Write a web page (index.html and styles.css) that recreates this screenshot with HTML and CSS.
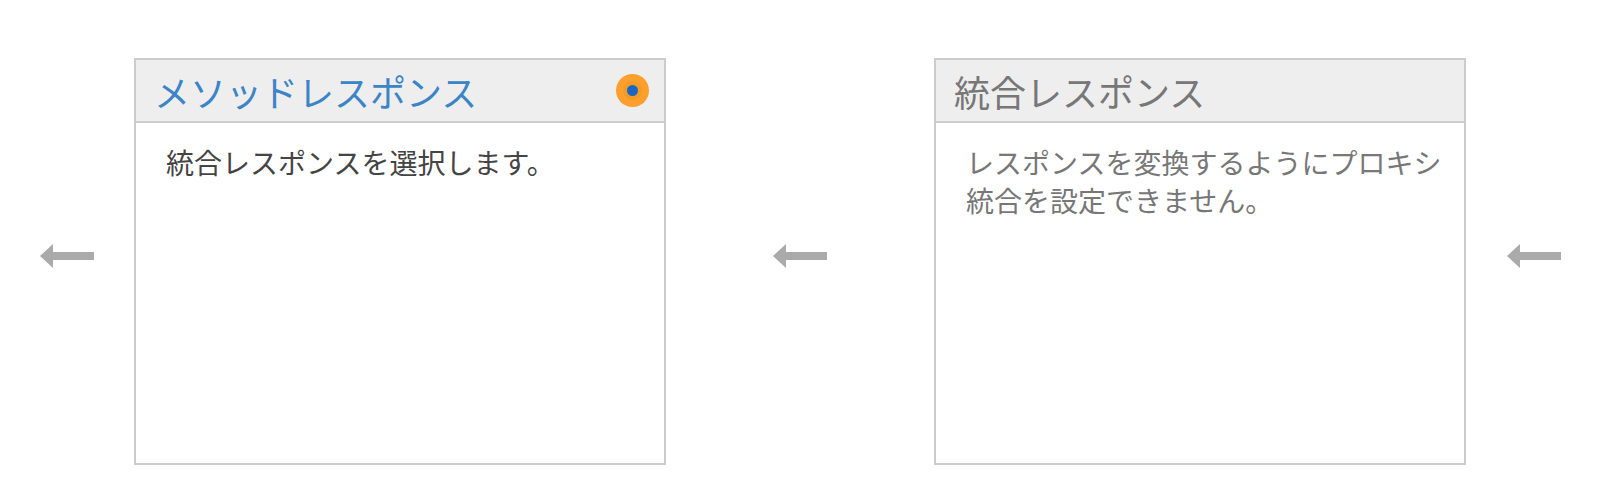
FILE: index.html
```html
<!DOCTYPE html>
<html>
  <head>
    <title>メソッドレスポンス</title>
    <link rel="stylesheet" href="styles.css">
  </head>
  <body>
    <div class="flow">
      <svg class="arrow" width="54" height="24" viewBox="0 0 54 24">
        <path d="M0 12 L13 0 L13 8 L54 8 L54 16 L13 16 L13 24 Z" fill="#aaaaaa"/>
      </svg>

      <div class="card card-first">
        <div class="card-header">
          <span class="card-title active">メソッドレスポンス</span>
          <span class="status"><span class="status-dot"></span></span>
        </div>
        <div class="card-body">統合レスポンスを選択します。</div>
      </div>

      <svg class="arrow" width="54" height="24" viewBox="0 0 54 24">
        <path d="M0 12 L13 0 L13 8 L54 8 L54 16 L13 16 L13 24 Z" fill="#aaaaaa"/>
      </svg>

      <div class="card card-second">
        <div class="card-header">
          <span class="card-title">統合レスポンス</span>
        </div>
        <div class="card-body muted">レスポンスを変換するようにプロキシ統合を設定できません。</div>
      </div>

      <svg class="arrow" width="54" height="24" viewBox="0 0 54 24">
        <path d="M0 12 L13 0 L13 8 L54 8 L54 16 L13 16 L13 24 Z" fill="#aaaaaa"/>
      </svg>
    </div>
  </body>
</html>
```

FILE: styles.css
```css
body {
  margin: 0;
  background: #ffffff;
  font-family: "Noto Sans CJK JP", "Noto Sans", sans-serif;
}
.flow {
  display: flex;
  align-items: flex-start;
  padding: 58px 0 0 40px;
}
.arrow {
  flex: none;
  display: block;
  margin-top: 186px;
}
.card {
  flex: none;
  box-sizing: border-box;
  width: 532px;
  height: 407px;
  border: 2px solid #cccccc;
  background: #ffffff;
}
.card-first {
  margin: 0 107px 0 40px;
}
.card-second {
  margin: 0 41px 0 107px;
}
.card-header {
  display: flex;
  align-items: center;
  justify-content: space-between;
  height: 61px;
  padding: 0 15px 0 18px;
  background: #eeeeee;
  border-bottom: 2px solid #cccccc;
}
.card-title {
  font-size: 36px;
  line-height: 1;
  color: #777777;
}
.card-title.active {
  color: #3b84c7;
}
.status {
  display: flex;
  align-items: center;
  justify-content: center;
  width: 33px;
  height: 33px;
  border-radius: 50%;
  background: #fd9f2c;
}
.status-dot {
  width: 11px;
  height: 11px;
  border-radius: 50%;
  background: #1766c2;
  box-shadow: 0 0 0 4px #f49a28;
}
.card-body {
  padding: 20px 18px 0 30px;
  font-size: 28px;
  line-height: 38px;
  color: #444444;
}
.card-body.muted {
  color: #777777;
}
```
